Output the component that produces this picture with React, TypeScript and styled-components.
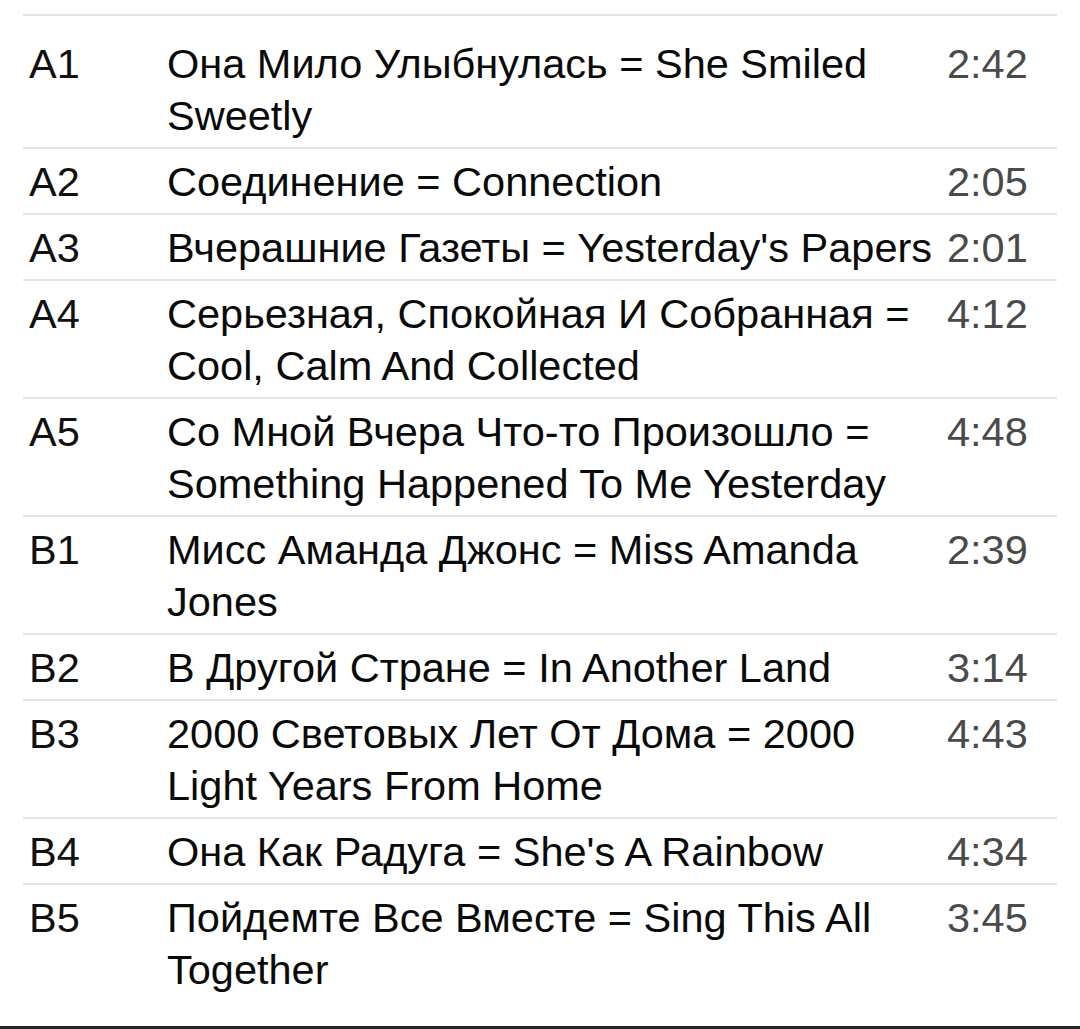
import React from "react";
import styled, { createGlobalStyle } from "styled-components";

const GlobalStyle = createGlobalStyle`
  html, body {
    margin: 0;
    padding: 0;
    background: #ffffff;
  }
  body {
    font-family: "Liberation Sans", Arial, sans-serif;
    -webkit-font-smoothing: antialiased;
  }
`;

const Page = styled.div`
  display: flex;
  flex-direction: column;
  height: 1029px;
  overflow: hidden;
  background: #ffffff;
`;

const TrackList = styled.div`
  flex: 1;
  margin: 14px 23px 0;
  border-top: 2px solid #e4e4e4;
  padding-top: 15px;
`;

const Row = styled.div<{ $last?: boolean }>`
  display: grid;
  grid-template-columns: 131px 1fr 110px;
  column-gap: 7px;
  padding: 7px 0 5px 6px;
  border-bottom: ${(p) => (p.$last ? "none" : "2px solid #e4e4e4")};
  font-size: 41.5px;
  line-height: 52px;
`;

const Position = styled.div`
  color: #111111;
`;

const Title = styled.div`
  color: #0a0a0a;
`;

const Duration = styled.div`
  color: #4a4a4a;
`;

const BottomBar = styled.div`
  height: 3px;
  background: #262626;
`;

const tracks = [
  { pos: "A1", title: "Она Мило Улыбнулась = She Smiled Sweetly", time: "2:42" },
  { pos: "A2", title: "Соединение = Connection", time: "2:05" },
  { pos: "A3", title: "Вчерашние Газеты = Yesterday's Papers", time: "2:01" },
  { pos: "A4", title: "Серьезная, Спокойная И Собранная = Cool, Calm And Collected", time: "4:12" },
  { pos: "A5", title: "Со Мной Вчера Что-то Произошло = Something Happened To Me Yesterday", time: "4:48" },
  { pos: "B1", title: "Мисс Аманда Джонс = Miss Amanda Jones", time: "2:39" },
  { pos: "B2", title: "В Другой Стране = In Another Land", time: "3:14" },
  { pos: "B3", title: "2000 Световых Лет От Дома = 2000 Light Years From Home", time: "4:43" },
  { pos: "B4", title: "Она Как Радуга = She's A Rainbow", time: "4:34" },
  { pos: "B5", title: "Пойдемте Все Вместе = Sing This All Together", time: "3:45" },
];

export default function App() {
  return (
    <Page>
      <GlobalStyle />
      <TrackList>
        {tracks.map((t, i) => (
          <Row key={t.pos} $last={i === tracks.length - 1}>
            <Position>{t.pos}</Position>
            <Title>{t.title}</Title>
            <Duration>{t.time}</Duration>
          </Row>
        ))}
      </TrackList>
      <BottomBar />
    </Page>
  );
}
